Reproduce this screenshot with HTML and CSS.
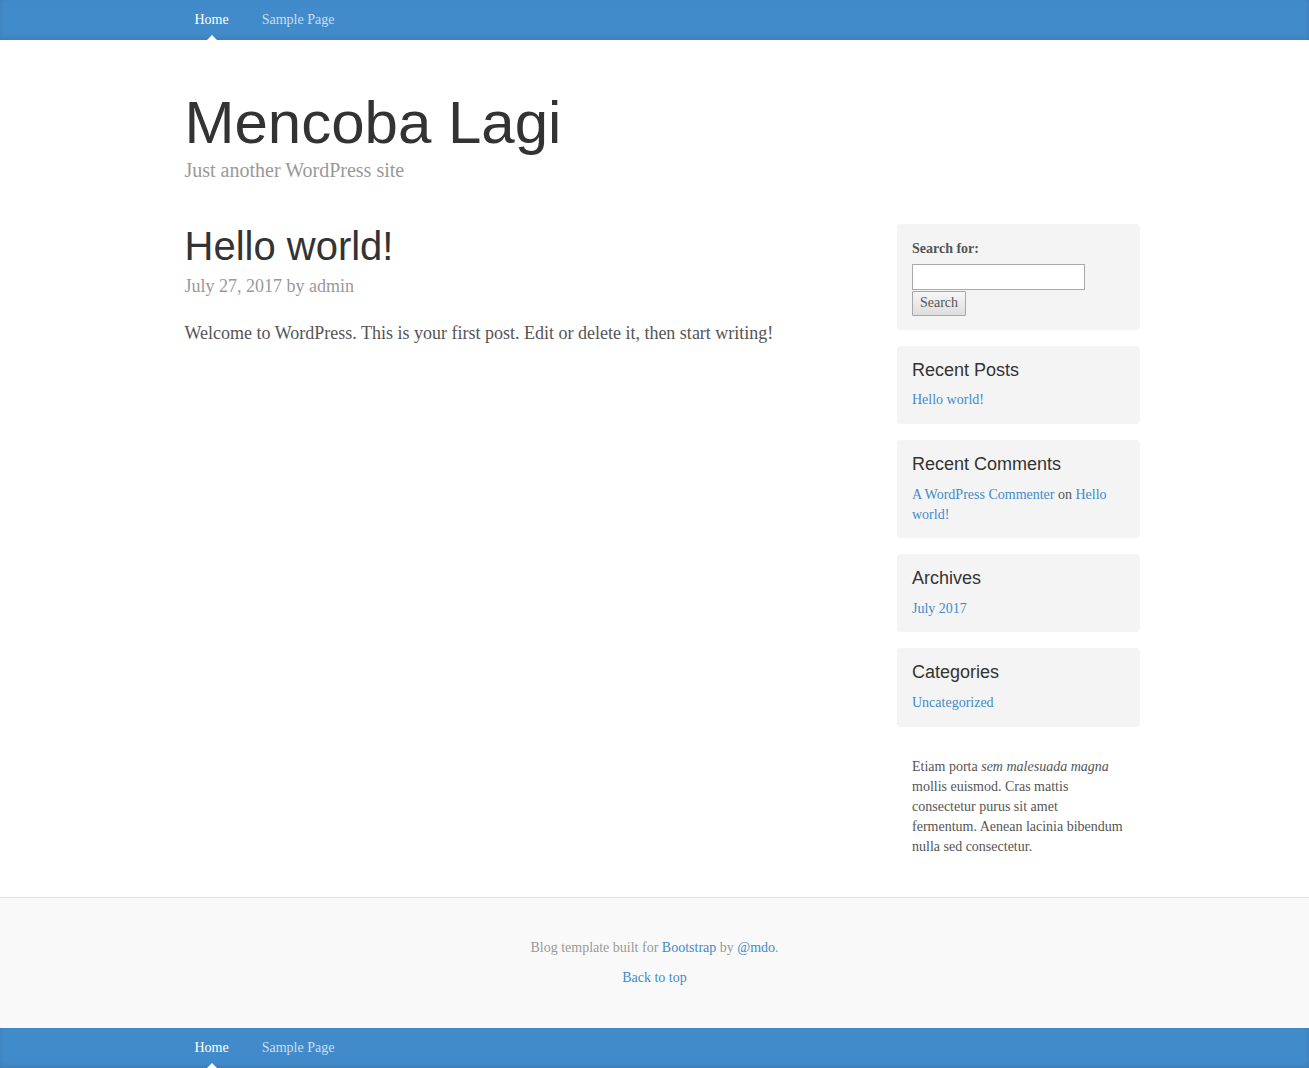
FILE: index.html
```html
<!DOCTYPE html>
<html lang="en">
<head>
<meta charset="utf-8">
<title>Mencoba Lagi</title>
<link rel="stylesheet" href="styles.css">
</head>
<body>
<div class="blog-masthead">
  <nav class="container blog-nav">
    <a class="blog-nav-item active" href="#">Home</a>
    <a class="blog-nav-item" href="#">Sample Page</a>
  </nav>
</div>

<div class="container">
  <div class="blog-header">
    <h1 class="blog-title">Mencoba Lagi</h1>
    <p class="blog-description">Just another WordPress site</p>
  </div>

  <div class="row">
    <div class="blog-main">
      <div class="blog-post">
        <h2 class="blog-post-title">Hello world!</h2>
        <p class="blog-post-meta">July 27, 2017 by <a class="meta-link" href="#">admin</a></p>
        <p class="blog-post-text">Welcome to WordPress. This is your first post. Edit or delete it, then start writing!</p>
      </div>
    </div>

    <aside class="blog-sidebar">
      <div class="sidebar-module sidebar-module-inset search-module">
        <form class="search-form">
          <label class="search-label" for="s">Search for:</label>
          <input class="search-input" type="text" id="s">
          <input class="search-button" type="submit" value="Search">
        </form>
      </div>
      <div class="sidebar-module sidebar-module-inset">
        <h4 class="widget-title">Recent Posts</h4>
        <ul class="widget-list">
          <li><a href="#">Hello world!</a></li>
        </ul>
      </div>
      <div class="sidebar-module sidebar-module-inset">
        <h4 class="widget-title">Recent Comments</h4>
        <ul class="widget-list">
          <li><a href="#">A WordPress Commenter</a> on <a href="#">Hello world!</a></li>
        </ul>
      </div>
      <div class="sidebar-module sidebar-module-inset">
        <h4 class="widget-title">Archives</h4>
        <ul class="widget-list">
          <li><a href="#">July 2017</a></li>
        </ul>
      </div>
      <div class="sidebar-module sidebar-module-inset">
        <h4 class="widget-title">Categories</h4>
        <ul class="widget-list">
          <li><a href="#">Uncategorized</a></li>
        </ul>
      </div>
      <div class="sidebar-module about-module">
        <p class="about-text">Etiam porta <em>sem malesuada magna</em> mollis euismod. Cras mattis consectetur purus sit amet fermentum. Aenean lacinia bibendum nulla sed consectetur.</p>
      </div>
    </aside>
  </div>
</div>

<footer class="blog-footer">
  <p class="footer-line">Blog template built for <a href="#">Bootstrap</a> by <a href="#">@mdo</a>.</p>
  <p class="footer-line last"><a href="#">Back to top</a></p>
</footer>

<div class="blog-masthead">
  <nav class="container blog-nav">
    <a class="blog-nav-item active" href="#">Home</a>
    <a class="blog-nav-item" href="#">Sample Page</a>
  </nav>
</div>
</body>
</html>
```

FILE: styles.css
```css
* {
  box-sizing: border-box;
}

html, body {
  margin: 0;
  padding: 0;
}

body {
  font-family: "Liberation Serif", "Times New Roman", serif;
  font-size: 14px;
  line-height: 20px;
  color: #555;
  background: #fff;
}

a {
  color: #428bca;
  text-decoration: none;
}

.container {
  width: 940px;
  margin: 0 auto;
}

/* Masthead */
.blog-masthead {
  background-color: #428bca;
  box-shadow: inset 0 -2px 5px rgba(0, 0, 0, .1);
  height: 40px;
}

.blog-nav {
  display: flex;
  gap: 13px;
}

.blog-nav-item {
  position: relative;
  display: block;
  padding: 10px;
  line-height: 20px;
  font-size: 14px;
  color: #cdddeb;
}

.blog-nav-item.active {
  color: #fff;
}

.blog-nav-item.active::after {
  position: absolute;
  bottom: 0;
  left: 50%;
  width: 0;
  height: 0;
  margin-left: -5px;
  content: "";
  border: 5px solid transparent;
  border-bottom-color: #fff;
}

/* Header */
.blog-header {
  padding-top: 20px;
  padding-bottom: 20px;
}

.blog-title {
  margin: 30px 0 0;
  font-family: "Liberation Sans", Arial, sans-serif;
  font-weight: normal;
  font-size: 60px;
  line-height: 66px;
  color: #333;
}

.blog-description {
  margin: 0;
  font-size: 20px;
  line-height: 28.57px;
  color: #999;
}

/* Layout */
.row {
  display: flex;
  align-items: flex-start;
}

.blog-main {
  flex: none;
  width: 616.67px;
  font-size: 18px;
  line-height: 27px;
}

.blog-post-title {
  margin: 19px 0 5px;
  font-family: "Liberation Sans", Arial, sans-serif;
  font-weight: normal;
  font-size: 40px;
  line-height: 44px;
  color: #333;
}

.blog-post-meta {
  margin: 0 0 20px;
  color: #999;
}

.meta-link {
  color: #999;
}

.blog-post-text {
  margin: 0;
}

/* Sidebar */
.blog-sidebar {
  flex: none;
  width: 212.5px;
  margin-left: auto;
  padding-top: 19px;
}

.sidebar-module {
  padding: 15px;
  margin: 0 -15px 16px;
}

.sidebar-module-inset {
  background-color: #f4f4f4;
  border-radius: 4px;
  padding-bottom: 13.5px;
}

.search-module {
  padding-bottom: 14px;
}

.about-module {
  padding-top: 14px;
  margin-bottom: 15px;
}

.search-form {
  margin: 0;
}

.search-label {
  display: block;
  font-weight: bold;
  margin-bottom: 5px;
  color: #555;
}

.search-input {
  display: block;
  width: 173px;
  height: 26px;
  margin: 0;
  border: 1px solid #a9a9a9;
  background: #fff;
  font-family: "Liberation Serif", serif;
  font-size: 14px;
}

.search-button {
  display: block;
  margin: 1px 0 0;
  width: 54px;
  height: 25px;
  padding: 0;
  border: 1px solid #a7a7a7;
  border-radius: 1px;
  background: linear-gradient(#f6f6f6, #dedede);
  font-family: "Liberation Serif", serif;
  font-size: 14px;
  color: #555;
}

.widget-title {
  margin: 0 0 10px;
  font-family: "Liberation Sans", Arial, sans-serif;
  font-weight: normal;
  font-size: 18px;
  line-height: 19.8px;
  color: #333;
}

.widget-list {
  list-style: none;
  margin: 0;
  padding: 0;
}

.about-text {
  margin: 0 0 10px;
}

/* Footer */
.blog-footer {
  margin-top: 0;
  padding: 40px 0;
  color: #999;
  text-align: center;
  background-color: #f9f9f9;
  border-top: 1px solid #e5e5e5;
}

.footer-line {
  margin: 0 0 10px;
}

.footer-line.last {
  margin-bottom: 0;
}
```
